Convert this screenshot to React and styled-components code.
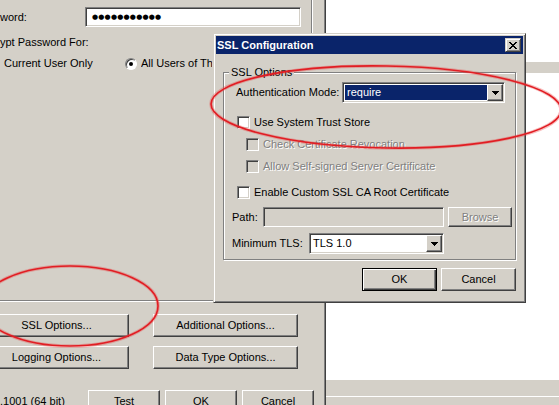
import React from "react";
import styled, { createGlobalStyle, css } from "styled-components";

const C = {
  face: "#d4d0c8",
  shadow: "#808080",
  dark: "#404040",
  light: "#ffffff",
  navy: "#0a246a",
};

const GlobalStyle = createGlobalStyle`
  *, *::before, *::after { box-sizing: border-box; }
  html, body { margin: 0; padding: 0; background: #ffffff; overflow: hidden; }
  body {
    font-family: "Liberation Sans", Arial, sans-serif;
    font-size: 11px;
    line-height: 13px;
    color: #000;
  }
  #root { width: 559px; height: 405px; }
`;

const raised = css`
  border: 1px solid;
  border-color: ${C.light} ${C.dark} ${C.dark} ${C.light};
  box-shadow: inset -1px -1px 0 ${C.shadow};
  background: ${C.face};
`;

const sunken = css`
  border: 1px solid;
  border-color: ${C.shadow} ${C.light} ${C.light} ${C.shadow};
  box-shadow: inset 1px 1px 0 ${C.dark}, inset -1px -1px 0 ${C.face};
`;

const disabledText = css`
  color: ${C.shadow};
  text-shadow: 1px 1px 0 ${C.light};
`;

const Screen = styled.div`
  position: relative;
  width: 559px;
  height: 405px;
  display: flex;
  overflow: hidden;
  background: #fff;
`;

/* ---------- background window ---------- */
const BackWindow = styled.div`
  flex: none;
  width: 326px;
  height: 405px;
  display: flex;
  flex-direction: column;
  background: ${C.face};
  border-right: 1px solid ${C.dark};
  box-shadow: inset -1px 0 0 ${C.shadow};
  white-space: nowrap;
`;

const TabPage = styled.div`
  flex: none;
  width: 313px;
  height: 302px;
  padding-top: 7px;
  display: flex;
  flex-direction: column;
  border-right: 1px solid ${C.light};
  border-bottom: 1px solid ${C.light};
  box-shadow: inset -1px -1px 0 ${C.shadow};
`;

const FieldRow = styled.div`
  display: flex;
  align-items: center;
  height: 20px;
`;

const FieldLabel = styled.span`
  flex: none;
  width: 85px;
`;

const PasswordBox = styled.div`
  ${sunken}
  flex: none;
  width: 216px;
  height: 20px;
  background: #fff;
  padding-left: 6px;
  display: flex;
  align-items: center;
  font-family: "DejaVu Sans", sans-serif;
  font-size: 7px;
  letter-spacing: 0.2px;
`;

const TextLine = styled.div`
  margin-top: ${(p) => p.$mt}px;
  height: 13px;
`;

const RadioRow = styled.div`
  margin-top: ${(p) => p.$mt}px;
  height: 13px;
  display: flex;
  align-items: center;
`;

const RadioText = styled.span`
  flex: none;
  width: ${(p) => (p.$w ? `${p.$w}px` : "auto")};
  padding-left: ${(p) => p.$pl || 0}px;
  overflow: hidden;
`;

const Radio = styled.span`
  flex: none;
  position: relative;
  width: 12px;
  height: 12px;
  border-radius: 50%;
  background: #fff;
  border: 1px solid;
  border-color: ${C.shadow} ${C.light} ${C.light} ${C.shadow};
  box-shadow: inset 1px 1px 0 ${C.dark};
  margin-right: 4px;
  &::after {
    content: "";
    position: absolute;
    left: 3px;
    top: 3px;
    width: 4px;
    height: 4px;
    border-radius: 50%;
    background: ${(p) => (p.$checked ? "#000" : "transparent")};
  }
`;

const OptionGrid = styled.div`
  margin: 12px 0 0 -16px;
  display: grid;
  grid-template-columns: 145px 145px;
  column-gap: 24px;
  row-gap: 9px;
`;

const FooterRow = styled.div`
  margin-top: 21px;
  display: flex;
  align-items: center;
  gap: 5px;
`;

const VersionText = styled.span`
  flex: none;
  width: 83px;
`;

const Button = styled.button`
  ${raised}
  flex: none;
  width: ${(p) => p.$w}px;
  height: ${(p) => p.$h || 23}px;
  padding: 0;
  margin: 0;
  font-family: inherit;
  font-size: 11px;
  line-height: 13px;
  color: #000;
  display: flex;
  align-items: center;
  justify-content: center;
  ${(p) =>
    p.$default &&
    css`
      border-color: #000;
      box-shadow: inset 1px 1px 0 ${C.light}, inset -1px -1px 0 ${C.dark},
        inset -2px -2px 0 ${C.shadow};
    `}
  ${(p) => p.disabled && disabledText}
`;

/* ---------- right background ---------- */
const RightPane = styled.div`
  flex: 1;
  display: flex;
  flex-direction: column;
`;

const WhiteArea = styled.div`
  flex: ${(p) => (p.$grow ? 1 : "none")};
  height: ${(p) => (p.$h ? `${p.$h}px` : "auto")};
  background: #fff;
`;

const GrayStrip = styled.div`
  flex: none;
  height: 11px;
  background: ${C.face};
`;

const StatusBar = styled.div`
  flex: none;
  height: 16px;
  background: ${C.face};
`;

const StatusBarLower = styled.div`
  flex: none;
  height: 9px;
  background: ${C.face};
  border-top: 1px solid ${C.light};
`;

/* ---------- dialog ---------- */
const Dialog = styled.div`
  position: absolute;
  left: 213px;
  top: 33px;
  width: 313px;
  height: 270px;
  padding: 2px;
  background: ${C.face};
  border: 1px solid;
  border-color: ${C.face} ${C.dark} ${C.dark} ${C.face};
  box-shadow: inset 1px 1px 0 ${C.light}, inset -1px -1px 0 ${C.shadow};
  display: flex;
  flex-direction: column;
  white-space: nowrap;
`;

const TitleBar = styled.div`
  flex: none;
  height: 18px;
  background: ${C.navy};
  display: flex;
  align-items: center;
  justify-content: space-between;
  padding: 0 2px 0 1px;
`;

const TitleText = styled.span`
  color: #fff;
  font-weight: bold;
  font-size: 11px;
`;

const CloseButton = styled.span`
  flex: none;
  width: 16px;
  height: 14px;
  background: ${C.face};
  border: 1px solid;
  border-color: ${C.face} ${C.dark} ${C.dark} ${C.face};
  box-shadow: inset 1px 1px 0 ${C.light}, inset -1px -1px 0 ${C.shadow};
  display: flex;
  align-items: center;
  justify-content: center;
`;

const DialogBody = styled.div`
  flex: 1;
  display: flex;
  flex-direction: column;
  padding: 18px 0 0 7px;
`;

const GroupBox = styled.div`
  position: relative;
  width: 293px;
  border: 1px solid ${C.shadow};
  box-shadow: inset 1px 1px 0 ${C.light}, 1px 1px 0 ${C.light};
  padding-bottom: 5px;
  display: flex;
  flex-direction: column;
`;

const GroupLabel = styled.span`
  position: absolute;
  top: -7px;
  left: 5px;
  padding: 0 2px;
  background: ${C.face};
`;

const GroupRow = styled.div`
  flex: none;
  display: flex;
  align-items: center;
  margin-top: ${(p) => p.$mt}px;
  padding-left: ${(p) => p.$pl}px;
  height: ${(p) => p.$h || 13}px;
`;

const Label = styled.span`
  flex: none;
  width: ${(p) => (p.$w ? `${p.$w}px` : "auto")};
  ${(p) => p.$disabled && disabledText}
`;

const CheckBox = styled.span`
  ${sunken}
  flex: none;
  width: 13px;
  height: 13px;
  background: ${(p) => (p.$disabled ? C.face : "#fff")};
  margin-right: 4px;
`;

const Combo = styled.div`
  ${sunken}
  flex: none;
  width: ${(p) => p.$w}px;
  height: 21px;
  padding: 1px;
  background: #fff;
  display: flex;
`;

const ComboValue = styled.span`
  flex: 1;
  display: flex;
  align-items: center;
  margin: 1px 0 1px 1px;
  padding-left: ${(p) => (p.$selected ? 2 : 1)}px;
  background: ${(p) => (p.$selected ? C.navy : "transparent")};
  color: ${(p) => (p.$selected ? "#fff" : "#000")};
`;

const DropButton = styled.span`
  ${raised}
  flex: none;
  width: 16px;
  height: 17px;
  display: flex;
  align-items: center;
  justify-content: center;
`;

const TextField = styled.div`
  ${sunken}
  flex: none;
  width: ${(p) => p.$w}px;
  height: 20px;
  background: ${(p) => (p.$disabled ? C.face : "#fff")};
  margin-right: 4px;
`;

const ButtonRow = styled.div`
  flex: none;
  margin-top: 8px;
  padding-right: 7px;
  display: flex;
  justify-content: flex-end;
  gap: 4px;
`;

const Annotation = styled.svg`
  position: absolute;
  left: 0;
  top: 0;
  pointer-events: none;
  overflow: visible;
`;

const CloseGlyph = () => (
  <svg width="8" height="7" viewBox="0 0 8 7" shapeRendering="crispEdges">
    <path
      fill="#000"
      d="M0 0h2v1H0zM6 0h2v1H6zM1 1h2v1H1zM5 1h2v1H5zM2 2h4v1H2zM3 3h2v1H3zM2 4h4v1H2zM1 5h2v1H1zM5 5h2v1H5zM0 6h2v1H0zM6 6h2v1H6z"
    />
  </svg>
);

const DownArrow = () => (
  <svg width="7" height="4" viewBox="0 0 7 4" shapeRendering="crispEdges">
    <path fill="#000" d="M0 0h7v1H0zM1 1h5v1H1zM2 2h3v1H2zM3 3h1v1H3z" />
  </svg>
);

export default function App() {
  return (
    <>
      <GlobalStyle />
      <Screen>
        <BackWindow>
          <TabPage>
            <FieldRow>
              <FieldLabel>word:</FieldLabel>
              <PasswordBox>●●●●●●●●●●●</PasswordBox>
            </FieldRow>
            <TextLine $mt={9}>ypt Password For:</TextLine>
            <RadioRow $mt={8}>
              <RadioText $w={125} $pl={4}>
                Current User Only
              </RadioText>
              <Radio $checked />
              <RadioText $w={71}>All Users of This Machine</RadioText>
            </RadioRow>
          </TabPage>
          <OptionGrid>
            <Button $w={145}>SSL Options...</Button>
            <Button $w={145}>Additional Options...</Button>
            <Button $w={145}>Logging Options...</Button>
            <Button $w={145}>Data Type Options...</Button>
          </OptionGrid>
          <FooterRow>
            <VersionText>.1001 (64 bit)</VersionText>
            <Button $w={72}>Test</Button>
            <Button $w={72}>OK</Button>
            <Button $w={72}>Cancel</Button>
          </FooterRow>
        </BackWindow>

        <RightPane>
          <WhiteArea $h={62} />
          <GrayStrip />
          <WhiteArea $grow />
          <StatusBar />
          <StatusBarLower />
        </RightPane>

        <Dialog>
          <TitleBar>
            <TitleText>SSL Configuration</TitleText>
            <CloseButton>
              <CloseGlyph />
            </CloseButton>
          </TitleBar>
          <DialogBody>
            <GroupBox>
              <GroupLabel>SSL Options</GroupLabel>
              <GroupRow $mt={9} $pl={12} $h={21}>
                <Label $w={106}>Authentication Mode:</Label>
                <Combo $w={163}>
                  <ComboValue $selected>require</ComboValue>
                  <DropButton>
                    <DownArrow />
                  </DropButton>
                </Combo>
              </GroupRow>
              <GroupRow $mt={13} $pl={13}>
                <CheckBox />
                <Label>Use System Trust Store</Label>
              </GroupRow>
              <GroupRow $mt={9} $pl={22}>
                <CheckBox $disabled />
                <Label $disabled>Check Certificate Revocation</Label>
              </GroupRow>
              <GroupRow $mt={9} $pl={22}>
                <CheckBox $disabled />
                <Label $disabled>Allow Self-signed Server Certificate</Label>
              </GroupRow>
              <GroupRow $mt={13} $pl={13}>
                <CheckBox />
                <Label>Enable Custom SSL CA Root Certificate</Label>
              </GroupRow>
              <GroupRow $mt={8} $pl={8} $h={20}>
                <Label $w={31}>Path:</Label>
                <TextField $w={181} $disabled />
                <Button $w={64} $h={20} disabled>
                  Browse
                </Button>
              </GroupRow>
              <GroupRow $mt={6} $pl={8} $h={21}>
                <Label $w={77}>Minimum TLS:</Label>
                <Combo $w={135}>
                  <ComboValue>TLS 1.0</ComboValue>
                  <DropButton>
                    <DownArrow />
                  </DropButton>
                </Combo>
              </GroupRow>
            </GroupBox>
            <ButtonRow>
              <Button $w={75} $default>
                OK
              </Button>
              <Button $w={75}>Cancel</Button>
            </ButtonRow>
          </DialogBody>
        </Dialog>

        <Annotation width="559" height="405" viewBox="0 0 559 405">
          <g fill="none" strokeLinecap="round">
            <ellipse cx="386" cy="107" rx="175" ry="41" transform="rotate(1 386 107)" stroke="rgba(235,70,70,0.35)" strokeWidth="3.5" />
            <ellipse cx="386" cy="107" rx="175" ry="41" transform="rotate(1 386 107)" stroke="#e11d23" strokeWidth="1.6" />
            <ellipse cx="70" cy="306" rx="88" ry="40" stroke="rgba(235,70,70,0.35)" strokeWidth="3.5" />
            <ellipse cx="70" cy="306" rx="88" ry="40" stroke="#e11d23" strokeWidth="1.6" />
          </g>
        </Annotation>
      </Screen>
    </>
  );
}
